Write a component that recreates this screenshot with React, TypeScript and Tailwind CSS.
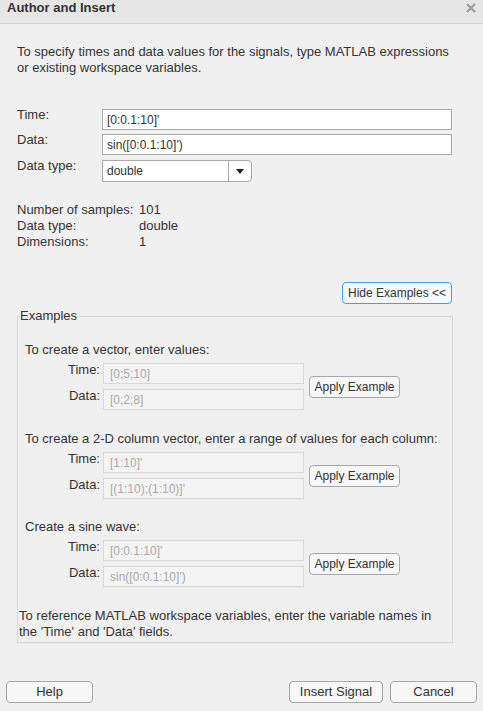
import React from 'react';

const font = { fontFamily: '"Liberation Sans", Arial, sans-serif' };

type ExampleProps = {
  title: string;
  time: string;
  data: string;
  topGap: string;
};

const ExampleGroup = ({ title, time, data, topGap }: ExampleProps) => (
  <div className={topGap}>
    <div className="leading-[16px]">{title}</div>
    <div className="mt-[5px] flex items-center">
      <div className="flex flex-col gap-[5px]">
        <div className="flex items-start">
          <span className="-mt-[1px] w-[75px] text-right leading-[16px]">Time:</span>
          <div className="ml-[3px] flex h-[21px] w-[201px] items-center border border-[#d9d9d9] bg-[#f4f4f4] px-[6px] text-[12px] text-[#aaaaaa]">
            {time}
          </div>
        </div>
        <div className="flex items-start">
          <span className="-mt-[1px] w-[75px] text-right leading-[16px]">Data:</span>
          <div className="ml-[3px] flex h-[21px] w-[201px] items-center border border-[#d9d9d9] bg-[#f4f4f4] px-[6px] text-[12px] text-[#aaaaaa]">
            {data}
          </div>
        </div>
      </div>
      <button className="ml-[5px] h-[22px] w-[91px] rounded-[4px] border border-[#a8a8a8] bg-[#f7f7f7] text-[12px] leading-[16px] text-[#333]">
        Apply Example
      </button>
    </div>
  </div>
);

const App = () => {
  return (
    <div className="flex h-[711px] w-[483px] flex-col bg-[#f0f0f0] text-[13px] text-[#333]" style={font}>
      {/* title bar */}
      <div className="flex h-[24px] items-center justify-between border-b border-[#d4d4d4] bg-[#e6e6e6] pl-[7px] pr-[7px]">
        <span className="-mt-[8px] text-[13px] font-bold text-[#333]">Author and Insert</span>
        <svg width="10" height="10" viewBox="0 0 10 10" className="-mt-[8px]">
          <path d="M1 1 L9 9 M9 1 L1 9" stroke="#9a9a9a" strokeWidth="2" />
        </svg>
      </div>

      <div className="flex flex-1 flex-col pl-[17px] pr-[31px]">
        <p className="mt-[20px] leading-[16px]">
          To specify times and data values for the signals, type MATLAB expressions
          <br />
          or existing workspace variables.
        </p>

        {/* main fields */}
        <div className="mt-[33px] flex flex-col">
          <div className="flex items-start">
            <span className="-mt-[2px] w-[85px] leading-[16px]">Time:</span>
            <div className="flex h-[21px] w-[350px] items-center border border-[#a9a9a9] bg-white px-[4px] text-[12px]">
              [0:0.1:10]'
            </div>
          </div>
          <div className="mt-[4px] flex items-start">
            <span className="-mt-[2px] w-[85px] leading-[16px]">Data:</span>
            <div className="flex h-[21px] w-[350px] items-center border border-[#a9a9a9] bg-white px-[4px] text-[12px]">
              sin([0:0.1:10]')
            </div>
          </div>
          <div className="mt-[5px] flex items-start">
            <span className="-mt-[2px] w-[85px] leading-[16px]">Data type:</span>
            <div className="flex h-[22px] w-[150px] border border-[#a9a9a9] bg-white rounded-r-[4px]">
              <div className="flex flex-1 items-center px-[4px] text-[12px]">double</div>
              <div className="flex w-[23px] items-center justify-center border-l border-[#a9a9a9]">
                <svg width="8" height="5" viewBox="0 0 8 5">
                  <path d="M0 0 L8 0 L4 5 Z" fill="#222" />
                </svg>
              </div>
            </div>
          </div>
        </div>

        {/* stats */}
        <div className="mt-[20px] flex flex-col leading-[16px]">
          <div className="flex"><span className="w-[122px]">Number of samples:</span><span>101</span></div>
          <div className="flex"><span className="w-[122px]">Data type:</span><span>double</span></div>
          <div className="flex"><span className="w-[122px]">Dimensions:</span><span>1</span></div>
        </div>

        <div className="mt-[32px] flex justify-end">
          <button className="h-[22px] w-[110px] rounded-[4px] border border-[#3da2f2] bg-[#f7f7f7] text-[12px] leading-[16px] text-[#333]">
            Hide Examples &lt;&lt;
          </button>
        </div>

        {/* examples */}
        <fieldset className="mt-[4px] w-[436px] border border-[#d8d8d8] pb-[2px] pl-[7px] pr-[7px]">
          <legend className="-ml-[5px] px-0 leading-[16px]">Examples</legend>
          <ExampleGroup
            topGap="mt-[18px]"
            title="To create a vector, enter values:"
            time="[0;5;10]"
            data="[0;2;8]"
          />
          <ExampleGroup
            topGap="mt-[21px]"
            title="To create a 2-D column vector, enter a range of values for each column:"
            time="[1:10]'"
            data="[(1:10);(1:10)]'"
          />
          <ExampleGroup
            topGap="mt-[20px]"
            title="Create a sine wave:"
            time="[0:0.1:10]'"
            data="sin([0:0.1:10]')"
          />
          <p className="mt-[21px] -ml-[6px] leading-[16px]">
            To reference MATLAB workspace variables, enter the variable names in
            <br />
            the 'Time' and 'Data' fields.
          </p>
        </fieldset>
      </div>

      {/* footer */}
      <div className="mb-[8px] flex items-center px-[6px]">
        <button className="h-[22px] w-[87px] rounded-[4px] border border-[#a8a8a8] bg-[#f7f7f7] text-[13px] leading-[16px]">
          Help
        </button>
        <div className="flex-1" />
        <button className="h-[22px] w-[94px] rounded-[4px] border border-[#a8a8a8] bg-[#f7f7f7] text-[13px] leading-[16px]">
          Insert Signal
        </button>
        <button className="ml-[7px] h-[22px] w-[87px] rounded-[4px] border border-[#a8a8a8] bg-[#f7f7f7] text-[13px] leading-[16px]">
          Cancel
        </button>
      </div>
    </div>
  );
};

export default App;
